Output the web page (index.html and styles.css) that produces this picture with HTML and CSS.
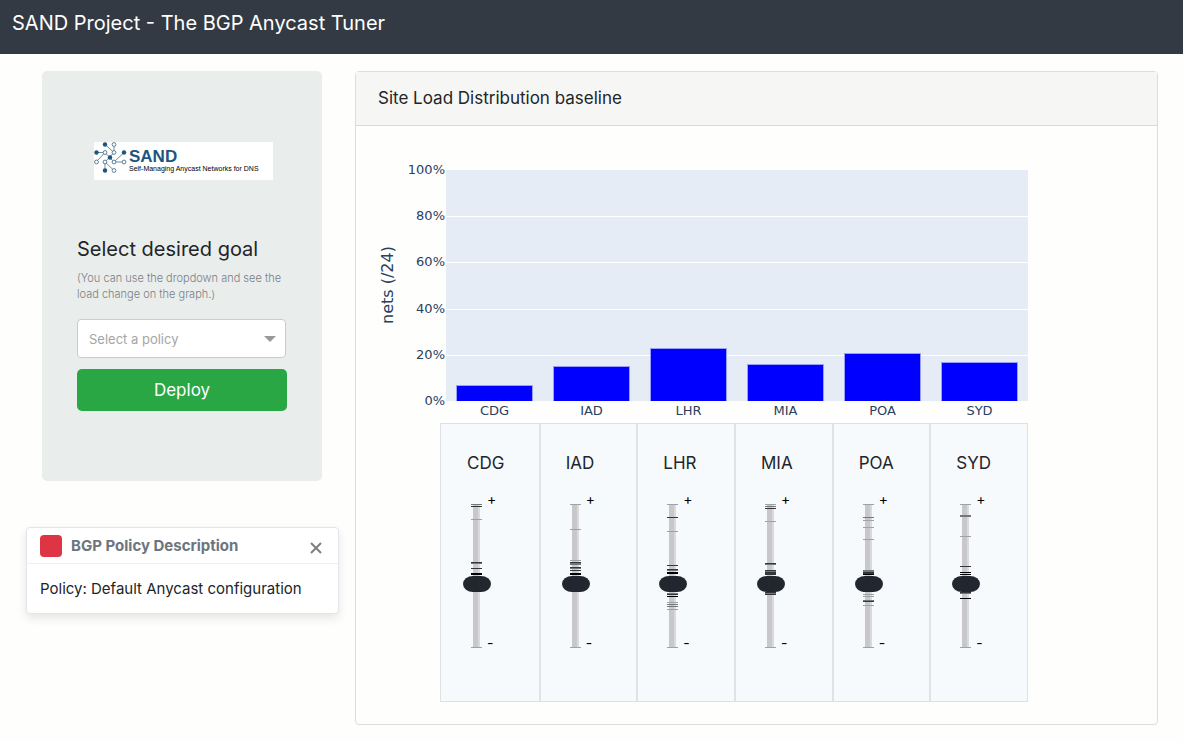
FILE: index.html
```html
<!DOCTYPE html>
<html lang="en">
<head>
<meta charset="utf-8">
<meta name="viewport" content="width=device-width, initial-scale=1">
<title>SAND Project - The BGP Anycast Tuner</title>
<link rel="stylesheet" href="styles.css">
</head>
<body>
<header class="navbar"><h1 class="brand">SAND Project - The BGP Anycast Tuner</h1></header>
<main class="layout">
  <aside class="side">
    <section class="goal">
      <div class="logo">
        <svg class="logo-mark" viewBox="0 0 33 33" width="33" height="33" aria-hidden="true">
          <path d="M11 2.500L20 10.500V2.500M2 10.500H11L2 20M30 10.500L20 20H30M11 28.500V20L20 28.500M11 10.500L20 20M20 10.500L11 20" fill="none" stroke="#6f8ca6" stroke-width="1"/>
          <g fill="#1c567c"><circle cx="11" cy="2.500" r="2.200"/><circle cx="2.500" cy="10.500" r="2.200"/><circle cx="30" cy="10.500" r="2.200"/><circle cx="16" cy="15.500" r="2.200"/><circle cx="11" cy="28.500" r="2.200"/></g>
          <g fill="#fff" stroke="#5b7f9c" stroke-width="1"><circle cx="20" cy="2.500" r="1.900"/><circle cx="11" cy="10.500" r="1.900"/><circle cx="20" cy="10.500" r="1.900"/><circle cx="2.500" cy="20" r="1.900"/><circle cx="11" cy="20" r="1.900"/><circle cx="20" cy="20" r="1.900"/><circle cx="30" cy="20" r="1.900"/><circle cx="20" cy="28.500" r="1.900"/></g>
        </svg>
        <div class="logo-text"><strong class="logo-name">SAND</strong><span class="logo-tag">Self-Managing Anycast Networks for DNS</span></div>
      </div>
      <h2 class="goal-title"><label for="policy">Select desired goal</label></h2>
      <p class="goal-hint">(You can use the dropdown and see the load change on the graph.)</p>
      <div class="select-wrap">
        <select class="select" id="policy"><option>Select a policy</option></select>
        <svg class="arrow" viewBox="0 0 12 6" width="12" height="6" aria-hidden="true"><path d="M0 0H12L6 6Z" fill="#999"/></svg>
      </div>
      <button class="deploy" type="button">Deploy</button>
    </section>
    <section class="toast">
      <header class="toast-head">
        <span class="toast-icon"></span>
        <strong class="toast-title">BGP Policy Description</strong>
        <button class="close" type="button" aria-label="Close"><svg viewBox="0 0 12 12" width="12" height="12"><path d="M1 1L11 11M11 1L1 11" stroke="#7d7f82" stroke-width="2" fill="none"/></svg></button>
      </header>
      <p class="toast-body">Policy: Default Anycast configuration</p>
    </section>
  </aside>
  <section class="card">
    <h2 class="card-head">Site Load Distribution baseline</h2>
    <div class="card-body">
      <div class="chart">
        <div class="y-title">nets (/24)</div>
        <div class="y-axis"><span>100%</span><span>80%</span><span>60%</span><span>40%</span><span>20%</span><span>0%</span></div>
        <div class="plot">
          <div class="lines"><i></i><i></i><i></i><i></i><i></i></div>
          <div class="bars">
            <div class="bar" style="height:7%"></div><div class="bar" style="height:15%"></div><div class="bar" style="height:23%"></div><div class="bar" style="height:16%"></div><div class="bar" style="height:21%"></div><div class="bar" style="height:17%"></div>
          </div>
        </div>
        <div class="x-axis"><span>CDG</span><span>IAD</span><span>LHR</span><span>MIA</span><span>POA</span><span>SYD</span></div>
      </div>
      <div class="sites">
        <div class="site"><label class="site-name" for="cdg">CDG</label><div class="control">
          <svg class="marks" viewBox="0 0 11 144" width="11" height="144" aria-hidden="true"><path class="rail" d="M2 0H7V144H2Z"/><path class="rail-edge" d="M7 0H9V144H7Z"/><path class="light" d="M0 15.500H11M0 143.500H11"/><path class="mid" d="M0 .5H11M0 59.500H11"/><path class="dark" d="M0 2.500H11M0 58.500H11M0 64.500H11"/><path class="black" d="M0 69.500H11M0 70.500H11"/></svg>
          <input class="slider" id="cdg" type="range" min="0" max="100" value="44"><div class="ends"><span>+</span><span>-</span></div></div></div>
        <div class="site"><label class="site-name" for="iad">IAD</label><div class="control">
          <svg class="marks" viewBox="0 0 11 144" width="11" height="144" aria-hidden="true"><path class="rail" d="M2 0H7V144H2Z"/><path class="rail-edge" d="M7 0H9V144H7Z"/><path class="light" d="M0 .5H11M0 25.500H11M0 56.500H11M0 143.500H11"/><path class="mid" d="M0 59.500H11M0 60.500H11M0 64.500H11"/><path class="dark" d="M0 58.500H11M0 63.500H11M0 66.500H11"/><path class="black" d="M0 69.500H11M0 70.500H11"/></svg>
          <input class="slider" id="iad" type="range" min="0" max="100" value="44"><div class="ends"><span>+</span><span>-</span></div></div></div>
        <div class="site"><label class="site-name" for="lhr">LHR</label><div class="control">
          <svg class="marks" viewBox="0 0 11 144" width="11" height="144" aria-hidden="true"><path class="rail" d="M2 0H7V144H2Z"/><path class="rail-edge" d="M7 0H9V144H7Z"/><path class="light" d="M0 .5H11M0 27.500H11M0 98.500H11M0 105.500H11M0 143.500H11M0 87.500H11"/><path class="mid" d="M0 66.500H11M0 89.500H11M0 100.500H11M0 102.500H11"/><path class="dark" d="M0 13.500H11M0 61.500H11M0 65.500H11M0 90.500H11"/><path class="black" d="M0 68.500H11M0 69.500H11M0 92.500H11"/></svg>
          <input class="slider" id="lhr" type="range" min="0" max="100" value="44"><div class="ends"><span>+</span><span>-</span></div></div></div>
        <div class="site"><label class="site-name" for="mia">MIA</label><div class="control">
          <svg class="marks" viewBox="0 0 11 144" width="11" height="144" aria-hidden="true"><path class="rail" d="M2 0H7V144H2Z"/><path class="rail-edge" d="M7 0H9V144H7Z"/><path class="light" d="M0 .5H11M0 17.500H11M0 143.500H11"/><path class="mid" d="M0 2.500H11M0 60.500H11M0 67.500H11M0 89.500H11"/><path class="dark" d="M0 4.500H11M0 59.500H11M0 66.500H11M0 68.500H11M0 69.500H11M0 70.500H11M0 88.500H11M0 90.500H11"/></svg>
          <input class="slider" id="mia" type="range" min="0" max="100" value="44"><div class="ends"><span>+</span><span>-</span></div></div></div>
        <div class="site"><label class="site-name" for="poa">POA</label><div class="control">
          <svg class="marks" viewBox="0 0 11 144" width="11" height="144" aria-hidden="true"><path class="rail" d="M2 0H7V144H2Z"/><path class="rail-edge" d="M7 0H9V144H7Z"/><path class="light" d="M0 .5H11M0 16.500H11M0 23.500H11M0 35.500H11M0 90.500H11M0 92.500H11M0 101.500H11M0 143.500H11"/><path class="mid" d="M0 13.500H11M0 66.500H11M0 67.500H11M0 96.500H11"/><path class="dark" d="M0 68.500H11M0 69.500H11M0 97.500H11"/><path class="black" d="M0 70.500H11M0 87.500H11"/></svg>
          <input class="slider" id="poa" type="range" min="0" max="100" value="44"><div class="ends"><span>+</span><span>-</span></div></div></div>
        <div class="site"><label class="site-name" for="syd">SYD</label><div class="control">
          <svg class="marks" viewBox="0 0 11 144" width="11" height="144" aria-hidden="true"><path class="rail" d="M2 0H7V144H2Z"/><path class="rail-edge" d="M7 0H9V144H7Z"/><path class="light" d="M0 .5H11M0 32.500H11M0 143.500H11"/><path class="mid" d="M0 11.500H11M0 12.500H11M0 89.500H11"/><path class="dark" d="M0 62.500H11M0 88.500H11"/><path class="black" d="M0 68.500H11M0 70.500H11M0 94.500H11"/></svg>
          <input class="slider" id="syd" type="range" min="0" max="100" value="44"><div class="ends"><span>+</span><span>-</span></div></div></div>
      </div>
    </div>
  </section>
</main>
</body>
</html>
```
FILE: styles.css
```css
* { box-sizing: border-box; }
body { margin: 0; background: #fefefd; color: #212529; font-family: Inter, "Liberation Sans", sans-serif; }
h1, h2, p { margin: 0; font-weight: 400; }
button, select, input { font-family: inherit; margin: 0; }

.navbar { padding: 7px 12px 15px; background: #343a43; color: #fff; }
.brand { font-size: 20px; line-height: 32px; }

.layout { display: grid; grid-template-columns: 313fr 803fr; gap: 16px; padding: 17px 25px 17px 26px; align-items: start; }
.side { display: grid; gap: 46px; }

.goal { margin: 0 17px 0 16px; padding: 71px 35px 70px; background: #e9edec; border-radius: 5px; }
.logo { display: flex; width: 179px; height: 38px; margin-left: 17px; padding-right: 4px; background: #fff; }
.logo-mark { flex: none; }
.logo-text { display: flex; flex-direction: column; margin: 7px 0 0 2px; font-family: "Liberation Sans", Arial, sans-serif; white-space: nowrap; }
.logo-name { color: #1c567c; font-size: 17px; line-height: 16px; }
.logo-tag { color: #000; font-size: 7px; line-height: 8px; }
.goal-title { margin-top: 55px; font-size: 20px; line-height: 28px; }
.goal-hint { margin-top: 7px; color: #7b8086; font-size: 11px; font-weight: 300; line-height: 16px; }
.select-wrap { display: grid; align-items: center; margin-top: 17px; margin-right: 1px; }
.select { grid-area: 1 / 1; width: 100%; height: 39px; padding: 0 11px; appearance: none; color: #a5a5a5; background: #fff; border: 1px solid #ccc9d2; border-radius: 4px; font-size: 13px; }
.arrow { grid-area: 1 / 1; justify-self: end; margin-right: 10px; pointer-events: none; }
.deploy { display: block; width: 100%; height: 42px; margin-top: 11px; color: #fff; background: #2aa745; border: 0; border-radius: 5px; font-size: 17px; }

.toast { background: #fff; border: 1px solid #e4e5ea; border-radius: 4px; box-shadow: 0 4px 10px rgba(0, 0, 0, .1); }
.toast-head { display: flex; align-items: center; height: 36px; padding: 0 16px 0 13px; border-bottom: 1px solid #eeeff2; }
.toast-icon { width: 22px; height: 22px; border-radius: 4px; background: #de3545; }
.toast-title { margin-left: 9px; color: #6c757d; font-size: 15px; font-weight: 700; }
.close { display: flex; margin-left: auto; padding: 4px 0 0; border: 0; background: none; }
.toast-body { padding: 13px 13px 12px; font-size: 15px; line-height: 24px; }

.card { border: 1px solid #dddddf; border-radius: 4px; }
.card-head { padding: 14px 22px 15px; background: #f6f6f5; border-bottom: 1px solid #d9dadb; font-size: 17px; line-height: 24px; }
.card-body { padding: 44px 129px 22px 22px; }

.chart { display: grid; grid-template-columns: 20px 48px minmax(0, 1fr); grid-template-rows: 231px 22px; color: #2a3f5f; font-family: "DejaVu Sans", Verdana, sans-serif; font-size: 13px; }
.y-title { writing-mode: vertical-rl; transform: rotate(180deg); text-align: center; font-size: 16px; line-height: 20px; }
.y-axis { display: flex; flex-direction: column; justify-content: space-between; margin: -8px 0; padding-right: 1px; text-align: right; line-height: 16px; }
.plot { display: grid; grid-template: 100% / 100%; }
.lines { grid-area: 1 / 1; display: grid; grid-template-rows: repeat(5, 1fr); background: #e5ecf6; }
.lines i + i { border-top: 1px solid #fff; }
.bars { grid-area: 1 / 1; display: grid; grid-template-columns: repeat(6, 1fr); align-items: end; justify-items: center; }
.bar { width: 80%; background: #00f; border: 1px solid #9a9dfa; border-bottom: 0; }
.x-axis { grid-column: 3; display: grid; grid-template-columns: repeat(6, 1fr); text-align: center; line-height: 20px; }

.sites { display: grid; grid-template-columns: repeat(6, minmax(0, 1fr)); margin-left: 62px; border: 1px solid #dee0e5; }
.site { padding: 26px 0 23px 26px; background: #f7fafd; }
.site + .site { padding-left: 25px; border-left: 2px solid #e1e2e7; }
.site-name { display: block; font-size: 17px; line-height: 26px; }
.control { display: grid; grid-template-columns: 20px 16px; margin: 18px 0 0 4px; padding: 10px 0 30px; }
.marks { grid-area: 1 / 1; display: block; }
.marks path { stroke-width: 1; }
.rail { fill: #c8c8ca; }
.rail-edge { fill: #dadadc; }
.light { stroke: #a0a3a6; }
.mid { stroke: #74777a; }
.dark { stroke: #34373a; }
.black { stroke: #000; }
.slider { grid-area: 1 / 1; width: 28px; height: 144px; margin-left: -8px; appearance: none; background: transparent; writing-mode: vertical-lr; direction: rtl; z-index: 1; }
.slider::-webkit-slider-thumb { appearance: none; width: 28px; height: 16px; border: 0; border-radius: 10px / 8px; background: #22262e; }
.slider::-moz-range-thumb { width: 28px; height: 16px; border: 0; border-radius: 10px / 8px; background: #22262e; }
.ends { grid-area: 1 / 2; display: flex; flex-direction: column; justify-content: space-between; height: 160px; margin: -13px 0 -3px -4px; font-size: 14px; line-height: 16px; color: #000; }
```
